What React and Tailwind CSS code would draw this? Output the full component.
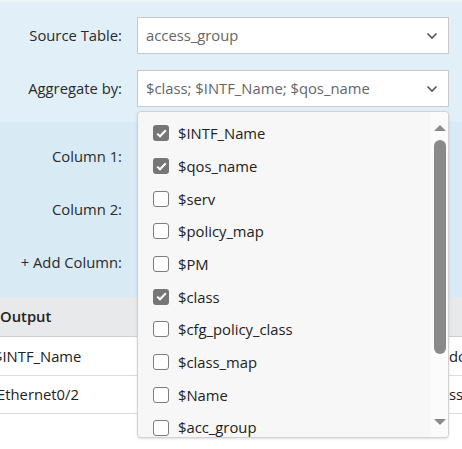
import React from "react";

const options = [
  { label: "$INTF_Name", checked: true },
  { label: "$qos_name", checked: true },
  { label: "$serv", checked: false },
  { label: "$policy_map", checked: false },
  { label: "$PM", checked: false },
  { label: "$class", checked: true },
  { label: "$cfg_policy_class", checked: false },
  { label: "$class_map", checked: false },
  { label: "$Name", checked: false },
  { label: "$acc_group", checked: false },
];

function Chevron() {
  return (
    <svg width="12" height="8" viewBox="0 0 12 8" className="shrink-0">
      <path d="M1.5 1.5 L6 6 L10.5 1.5" fill="none" stroke="#555" strokeWidth="1.6" />
    </svg>
  );
}

function Select({ value }) {
  return (
    <div className="flex h-[37px] w-[312px] items-center justify-between border border-[#c9c9c9] bg-white pl-[8px] pr-[10px] text-[#666]">
      <span>{value}</span>
      <Chevron />
    </div>
  );
}

function Row({ label, children }) {
  return (
    <div className="flex h-[37px] items-center">
      <div className="w-[122px] shrink-0 text-right text-[#2a2a2a]">{label}</div>
      <div className="ml-[15px]">{children}</div>
    </div>
  );
}

function Checkbox({ checked }) {
  if (checked) {
    return (
      <div className="flex h-[16px] w-[16px] items-center justify-center rounded-[3px] bg-[#767676]">
        <svg width="11" height="9" viewBox="0 0 11 9">
          <path d="M1.2 4.6 L4 7.3 L9.8 1.3" fill="none" stroke="white" strokeWidth="2" />
        </svg>
      </div>
    );
  }
  return <div className="h-[16px] w-[16px] rounded-[3px] border-[1.5px] border-[#7c7c7c] bg-white" />;
}

export default function App() {
  return (
    <div className="relative h-[449px] w-[462px] overflow-hidden bg-white font-['Open_Sans',sans-serif] text-[14.8px]">
      {/* top form */}
      <div className="flex flex-col gap-[16px] border-t-2 border-[#ecf6fb] bg-[#e1f0f8] pb-[15px] pt-[15px]">
        <Row label="Source Table:">
          <Select value="access_group" />
        </Row>
        <Row label="Aggregate by:">
          <Select value="$class; $INTF_Name; $qos_name" />
        </Row>
      </div>
      <div className="flex flex-col gap-[16px] bg-[#d8eaf4] py-[16px]">
        <Row label="Column 1:" />
        <Row label="Column 2:" />
        <Row label="+ Add Column:" />
      </div>

      {/* table */}
      <div className="text-[#222]">
        <div className="flex h-[40px] items-center border-b border-[#cfcfcf] bg-[#e8e9eb] font-semibold">
          <div className="w-[448px] shrink-0">Output</div>
        </div>
        <div className="flex h-[39px] items-center border-b border-[#dcdcdc] bg-white">
          <div className="ml-[-6px] w-[455px] shrink-0">$INTF_Name</div>
          <div>do</div>
        </div>
        <div className="flex h-[38px] items-center border-b border-[#dcdcdc] bg-white">
          <div className="ml-[-3px] w-[452px] shrink-0">Ethernet0/2</div>
          <div>ss</div>
        </div>
      </div>

      {/* open dropdown */}
      <div className="absolute left-[137px] top-[111px] flex h-[327px] w-[312px] overflow-hidden rounded-[4px] border border-[#d2d2d2] bg-[#f7f7f7] shadow-sm">
        <div className="flex-1 pt-[5px]">
          {options.map((o) => (
            <div key={o.label} className="flex h-[32.7px] items-center pl-[15px] text-[#222]">
              <Checkbox checked={o.checked} />
              <span className="ml-[9px]">{o.label}</span>
            </div>
          ))}
        </div>
        <div className="flex w-[17px] flex-col items-center bg-[#fbfbfb]">
          <div className="mt-[13px] h-0 w-0 border-x-[6px] border-b-[6px] border-x-transparent border-b-[#8a8a8a]" />
          <div className="mt-[9px] h-[214px] w-[12px] rounded-full bg-[#8a8a8a]" />
          <div className="mt-auto mb-[12px] h-0 w-0 border-x-[6px] border-t-[6px] border-x-transparent border-t-[#8a8a8a]" />
        </div>
      </div>
    </div>
  );
}
